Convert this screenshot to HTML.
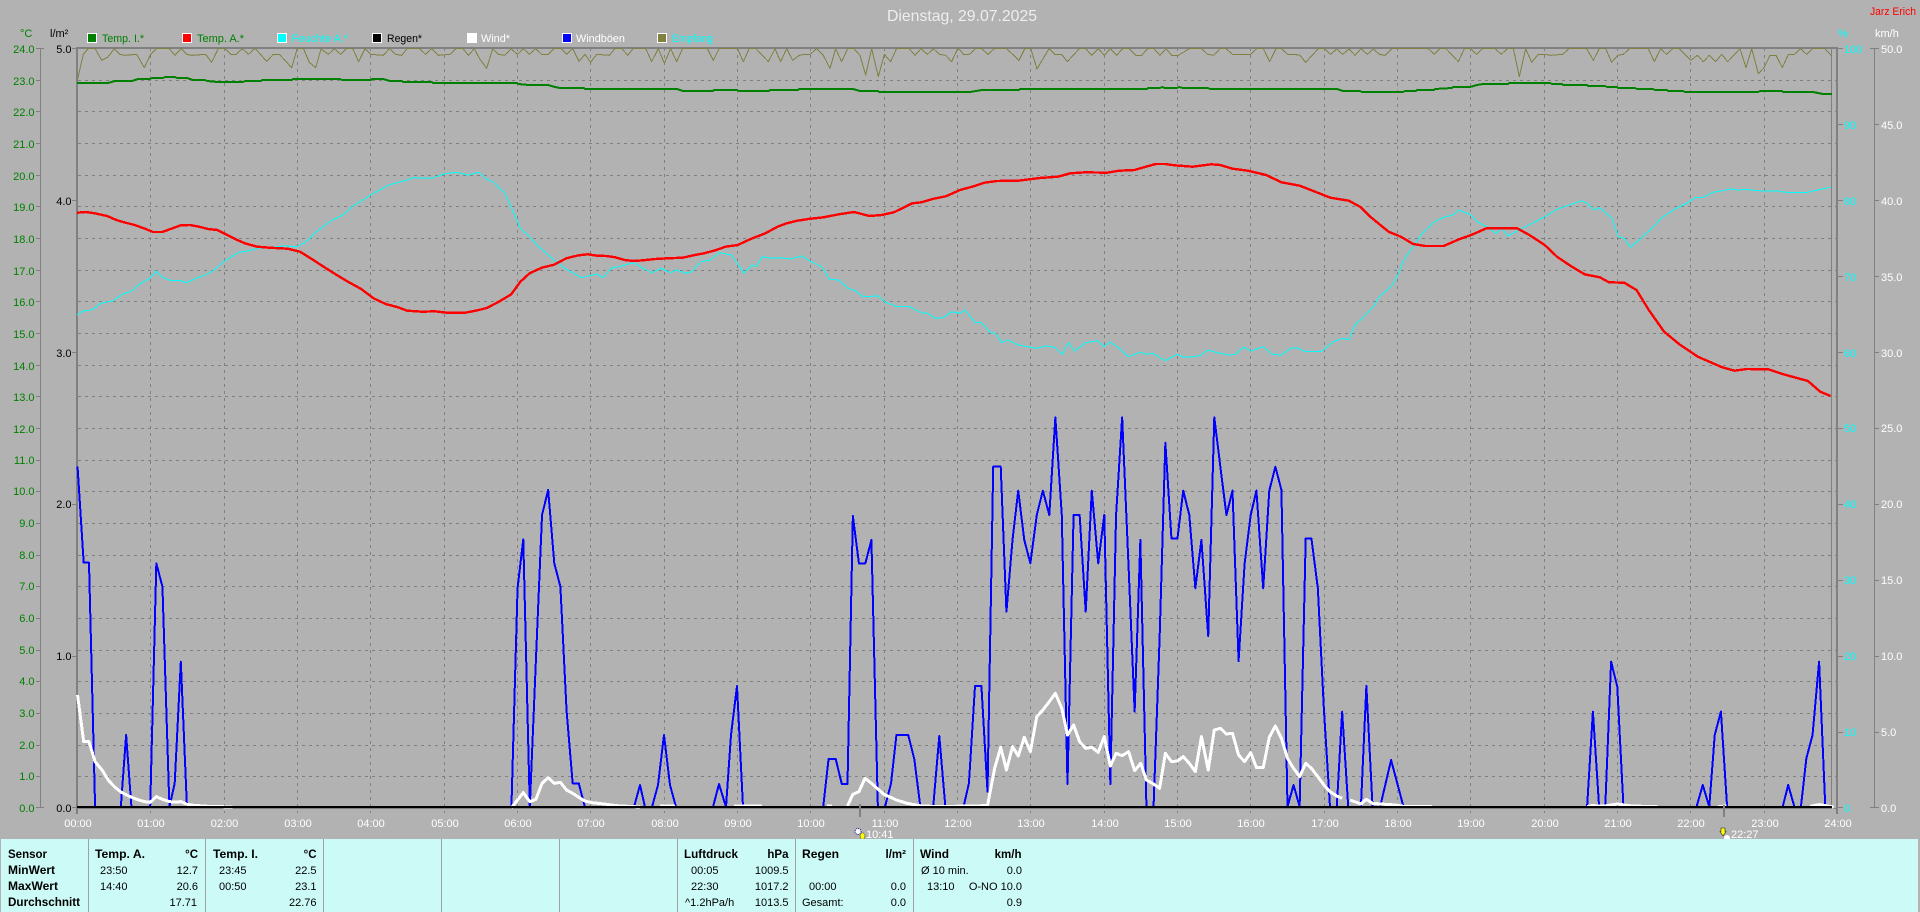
<!DOCTYPE html>
<html lang="de">
<head>
<meta charset="utf-8">
<title>Dienstag, 29.07.2025</title>
<style>
html,body{margin:0;padding:0;background:#b2b2b2;width:1920px;height:912px;overflow:hidden}
svg{display:block}
text{font-family:"Liberation Sans",Arial,sans-serif;font-size:11px}
.l{fill:none;stroke-linejoin:round;shape-rendering:crispEdges}
.b{font-weight:bold;font-size:11.5px}
polyline{vector-effect:non-scaling-stroke}
</style>
</head>
<body>
<svg xmlns="http://www.w3.org/2000/svg" width="1920" height="912" viewBox="0 0 1920 912">
<rect width="1920" height="912" fill="#b2b2b2"/>

<!-- title -->
<text x="887" y="21" fill="#eee" style="font-size:16px" textLength="150" lengthAdjust="spacingAndGlyphs">Dienstag, 29.07.2025</text>
<text x="1870" y="15" fill="#f00" textLength="46" lengthAdjust="spacingAndGlyphs">Jarz Erich</text>

<!-- legend -->
<g stroke="#fff" stroke-width="1" shape-rendering="crispEdges">
<rect x="87.5" y="33.5" width="9" height="9" fill="#008000"/>
<rect x="182.5" y="33.5" width="9" height="9" fill="#f00"/>
<rect x="277.5" y="33.5" width="9" height="9" fill="#0ff"/>
<rect x="372.5" y="33.5" width="9" height="9" fill="#000"/>
<rect x="467.5" y="33.5" width="9" height="9" fill="#fff"/>
<rect x="562.5" y="33.5" width="9" height="9" fill="#00f"/>
<rect x="657.5" y="33.5" width="9" height="9" fill="#808040"/>
</g>
<text x="102" y="42" fill="#008000" textLength="42" lengthAdjust="spacingAndGlyphs">Temp. I.*</text>
<text x="197" y="42" fill="#008000" textLength="47" lengthAdjust="spacingAndGlyphs">Temp. A.*</text>
<text x="292" y="42" fill="#0ff" textLength="56" lengthAdjust="spacingAndGlyphs">Feuchte A.*</text>
<text x="387" y="42" fill="#000" textLength="35" lengthAdjust="spacingAndGlyphs">Regen*</text>
<text x="481" y="42" fill="#fff" textLength="29" lengthAdjust="spacingAndGlyphs">Wind*</text>
<text x="576" y="42" fill="#fff" textLength="49" lengthAdjust="spacingAndGlyphs">Windböen</text>
<text x="672" y="42" fill="#0ff" textLength="41" lengthAdjust="spacingAndGlyphs">Empfang</text>

<!-- unit labels -->
<text x="20" y="37" fill="#008000">°C</text>
<text x="50" y="37" fill="#000">l/m²</text>
<text x="1838" y="37" fill="#0ff">%</text>
<text x="1875" y="37" fill="#fff">km/h</text>

<!-- grid -->
<path fill="none" stroke="#808080" stroke-width="1" stroke-dasharray="3 4" shape-rendering="crispEdges" d="M78 80.5H1837M78 111.5H1837M78 143.5H1837M78 175.5H1837M78 206.5H1837M78 238.5H1837M78 270.5H1837M78 301.5H1837M78 333.5H1837M78 365.5H1837M78 396.5H1837M78 428.5H1837M78 460.5H1837M78 491.5H1837M78 523.5H1837M78 555.5H1837M78 586.5H1837M78 618.5H1837M78 650.5H1837M78 681.5H1837M78 713.5H1837M78 745.5H1837M78 776.5H1837
M150.5 48V813M224.5 48V813M297.5 48V813M370.5 48V813M444.5 48V813M517.5 48V813M590.5 48V813M664.5 48V813M737.5 48V813M810.5 48V813M884.5 48V813M957.5 48V813M1030.5 48V813M1104.5 48V813M1177.5 48V813M1250.5 48V813M1324.5 48V813M1397.5 48V813M1470.5 48V813M1544.5 48V813M1617.5 48V813M1690.5 48V813M1764.5 48V813"/>

<!-- axes -->
<g fill="#808080" shape-rendering="crispEdges">
<rect x="76" y="47" width="1762" height="2"/>
<rect x="76" y="47" width="2" height="767"/>
<rect x="1836" y="47" width="2" height="767"/>
<rect x="1831" y="48" width="1" height="760"/>
<rect x="40" y="48" width="1" height="760"/>
<rect x="1874" y="48" width="1" height="760"/>
<rect x="76" y="808" width="1762" height="1"/>
<rect x="36" y="48" width="8" height="1"/><rect x="36" y="807" width="8" height="1"/>
<rect x="1870" y="48" width="9" height="1"/><rect x="1870" y="807" width="9" height="1"/>
<path fill="none" stroke="#808080" d="M36 80.5h5M36 111.5h5M36 143.5h5M36 175.5h5M36 206.5h5M36 238.5h5M36 270.5h5M36 301.5h5M36 333.5h5M36 365.5h5M36 396.5h5M36 428.5h5M36 460.5h5M36 491.5h5M36 523.5h5M36 555.5h5M36 586.5h5M36 618.5h5M36 650.5h5M36 681.5h5M36 713.5h5M36 745.5h5M36 776.5h5
M72 48.5h5M72 200.5h5M72 352.5h5M72 504.5h5M72 656.5h5M72 807.5h5
M1838 48.5h5M1838 124.5h5M1838 200.5h5M1838 276.5h5M1838 352.5h5M1838 428.5h5M1838 504.5h5M1838 580.5h5M1838 656.5h5M1838 732.5h5M1838 807.5h5
M1875 124.5h4M1875 200.5h4M1875 276.5h4M1875 352.5h4M1875 428.5h4M1875 504.5h4M1875 580.5h4M1875 656.5h4M1875 732.5h4"/>
</g>

<!-- left temperature labels -->
<g fill="#008000" text-anchor="end">
<text x="34.5" y="53">24.0</text><text x="34.5" y="85">23.0</text><text x="34.5" y="116">22.0</text><text x="34.5" y="148">21.0</text><text x="34.5" y="180">20.0</text><text x="34.5" y="211">19.0</text><text x="34.5" y="243">18.0</text><text x="34.5" y="275">17.0</text><text x="34.5" y="306">16.0</text><text x="34.5" y="338">15.0</text><text x="34.5" y="370">14.0</text><text x="34.5" y="401">13.0</text><text x="34.5" y="433">12.0</text><text x="34.5" y="464">11.0</text><text x="34.5" y="495">10.0</text><text x="34.5" y="527">9.0</text><text x="34.5" y="559">8.0</text><text x="34.5" y="590">7.0</text><text x="34.5" y="622">6.0</text><text x="34.5" y="654">5.0</text><text x="34.5" y="685">4.0</text><text x="34.5" y="717">3.0</text><text x="34.5" y="749">2.0</text><text x="34.5" y="780">1.0</text><text x="34.5" y="812">0.0</text>
</g>
<!-- rain labels -->
<g fill="#000" text-anchor="end">
<text x="71.5" y="53">5.0</text><text x="71.5" y="205">4.0</text><text x="71.5" y="357">3.0</text><text x="71.5" y="508">2.0</text><text x="71.5" y="660">1.0</text><text x="71.5" y="812">0.0</text>
</g>
<!-- humidity labels -->
<g fill="#0ff">
<text x="1844" y="53">100</text><text x="1844" y="129">90</text><text x="1844" y="205">80</text><text x="1844" y="281">70</text><text x="1844" y="357">60</text><text x="1844" y="432">50</text><text x="1844" y="508">40</text><text x="1844" y="584">30</text><text x="1844" y="660">20</text><text x="1844" y="736">10</text><text x="1844" y="812">0</text>
</g>
<!-- km/h labels -->
<g fill="#fff">
<text x="1881" y="53">50.0</text><text x="1881" y="129">45.0</text><text x="1881" y="205">40.0</text><text x="1881" y="281">35.0</text><text x="1881" y="357">30.0</text><text x="1881" y="432">25.0</text><text x="1881" y="508">20.0</text><text x="1881" y="584">15.0</text><text x="1881" y="660">10.0</text><text x="1881" y="736">5.0</text><text x="1881" y="812">0.0</text>
</g>

<!-- Empfang (olive) -->
<g class="l" stroke="#808040" stroke-width="1">
<polyline transform="scale(.33333)" points="232,241 250,163 265,145 285,145 305,181 323,172 343,146 360,163 375,166 410,163 433,203 452,163 470,145 507,145 525,166 543,146 560,163 575,166 617,163 635,187 655,145 675,145 692,163 708,163 727,146 745,163 765,145 800,184 820,163 838,163 875,203 892,145 910,145 928,187 947,203 963,147 985,163 1003,146 1022,163 1040,145 1058,145 1076,185 1095,146 1112,163 1150,166 1168,146 1187,163 1205,166 1222,145 1258,145 1277,163 1295,146 1315,166 1350,163 1368,145 1388,145 1405,166 1423,146 1440,178"/>
<polyline transform="translate(480 0) scale(.33333)" points="0,178 20,205 38,147 55,163 75,166 93,146 112,163 130,146 148,163 167,146 185,163 205,163 222,145 242,145 260,163 278,146 297,184 315,163 332,187 350,163 388,166 405,145 425,145 443,166 460,145 497,145 515,185 535,146 553,190 572,146 590,185 608,145 682,145 700,181 718,145 772,145 790,185 808,145 827,145 865,185 885,146 902,185 920,146 938,181 958,166 975,163 990,163 1010,146 1030,166 1050,205 1067,146 1085,185 1103,146 1122,146 1140,166 1157,225 1175,146 1195,230 1213,163 1232,185 1250,145 1287,145 1305,166 1323,146 1342,163 1360,146 1378,163 1397,166 1415,185 1433,146 1440,150"/>
<polyline transform="translate(960 0) scale(.33333)" points="0,150 10,163 28,163 47,146 65,146 84,163 103,146 140,146 177,181 195,145 212,145 231,207 267,146 285,163 305,163 322,185 358,146 377,146 395,166 415,146 433,166 450,146 470,166 488,146 508,146 527,166 545,166 563,146 582,146 600,166 618,146 635,166 655,166 688,146 725,146 743,163 762,166 780,146 798,146 818,163 872,163 890,146 910,146 929,185 948,146 965,146 983,163 1003,163 1020,166 1037,187 1075,146 1093,146 1112,163 1130,147 1148,163 1167,147 1185,166 1203,146 1222,163 1240,147 1258,163 1275,166 1295,146 1405,146 1423,163 1440,146"/>
<polyline transform="translate(1440 0) scale(.33333)" points="0,146 18,146 55,185 73,146 91,146 110,163 128,146 165,146 184,163 202,146 220,146 238,230 257,146 275,187 295,163 313,163 332,166 368,163 387,146 440,146 460,181 478,146 497,146 515,187 533,166 550,163 568,146 625,146 643,185 662,146 680,163 698,146 718,146 752,181 772,166 790,185 808,166 827,185 845,163 863,185 900,146 918,203 935,146 955,221 972,203 990,166 1008,166 1027,203 1045,163 1063,163 1082,146 1100,163 1118,146 1155,146 1173,166"/>
</g>

<!-- Temp I (green) -->
<polyline class="l" stroke="#008000" stroke-width="2" points="77,83 108,83 115,81 132,81 138,79 150,79 152,78 163,78 165,77 175,77 177,78 187,78 193,80 205,80 207,81 218,82 243,82 245,81 261,81 262,80 292,80 293,79 340,79 342,80 371,80 372,79 383,79 390,81 402,81 403,82 432,82 433,83 517,83 518,84 529,85 548,85 555,87 560,88 584,88 585,89 677,89 683,91 713,91 714,90 737,90 739,91 769,91 770,90 798,90 799,89 853,89 860,91 878,91 879,92 970,92 982,90 1019,90 1020,89 1147,89 1148,88 1160,88 1162,87 1165,88 1177,88 1179,87 1183,88 1208,88 1210,89 1337,89 1343,91 1360,91 1362,92 1403,92 1405,91 1416,91 1417,90 1434,90 1435,89 1452,88 1453,87 1470,87 1477,85 1483,84 1508,84 1509,83 1550,83 1552,84 1562,84 1563,85 1587,85 1588,86 1605,86 1607,87 1617,87 1618,88 1635,88 1637,89 1653,89 1655,90 1667,90 1668,91 1683,91 1685,92 1758,92 1760,91 1782,91 1783,92 1813,92 1818,93 1823,94 1832,94"/>

<!-- Feuchte (cyan) -->
<polyline class="l" stroke="#0ff" stroke-width="1" points="77,315 82.7,311 91.8,310 101,303.3 113.3,300.7 122.4,294.3 131.6,291 140.8,283.3 150,278.3 156.1,271 162.2,277.3 171.4,280.7 180.6,280.7 186.7,282.7 195.9,278.3 205.1,275 214.3,270 223.5,261.7 238.8,252.3 248,251 257.1,248.3 269.4,247.3 284.7,246 296.9,246.7 306.1,241.7 318.4,230 330.6,221 342.9,215 352,206.7 373.5,193.3 388.8,185 407.1,180 413.3,177.7 431.6,178.3 443.9,174 456.1,172.3 468.4,175 478.8,172.3 486.7,179.3 492.9,181.7 505.1,193.3 520.4,228.3 529.6,236.7 538.8,246.7 554.1,260 566.3,269.3 581.6,277.7 597,274 603.1,277.7 611,268.3 621.4,266 633.7,262.7 642.9,268.3 652,272.7 661.2,268.3 670.4,272.7 676.5,270 685.7,273.3 691.8,271.7 701,261.7 710.2,260 719.4,252.7 731.6,255 743.9,273.3 751.8,265 756.1,266.7 762.2,256.7 771.4,258.3 780.6,257.7 789.8,259 802,256 811.2,261.7 821.6,266.7 829.6,279.3 838.8,280 848,288.3 854.1,290 863.3,296.7 878.6,296 884.7,301.7 896.9,306.7 909.2,306.7 921.4,312.7 927.6,313.3 935.5,318.3 942.9,317.7 952,311.7 960,313.3 964.9,310 975.3,322.7 981.4,322.7 990.6,332.7 995.5,333.3 1001.6,342.7 1007.8,340 1018.2,345 1036.5,348.3 1045.7,346 1054.9,347.3 1062.2,354.3 1068.4,342.7 1074.5,351 1085.5,342.7 1097.8,340.7 1103.9,346.7 1110,342 1119.2,348.3 1128.4,356.7 1140.6,352.3 1146.7,354.3 1152.9,353.3 1165.1,360.7 1177.3,354.3 1183.5,357.3 1192.7,356.7 1200,355.7 1208,350 1217.1,352.7 1229.4,355 1235.5,354.3 1243.5,347 1250.8,351 1263.1,346.7 1272.2,354.3 1281.4,355 1290.6,348.3 1296.7,347.7 1305.9,351.7 1321.2,351.7 1333.5,341.7 1342.7,338.3 1348.8,340 1354.9,325 1364.1,316.7 1373.3,306.7 1379.4,296.7 1391.6,286 1397.8,275 1403.9,260 1413.1,246.7 1422.2,233.3 1434.5,221.7 1443.7,217.3 1452.9,215 1459,210 1471.2,215 1477.3,221.7 1486.5,226.7 1495.7,233.3 1501.8,228.3 1508,236 1520.2,229.3 1532.4,223.3 1544.7,216.7 1557,209.3 1566.1,206 1581.4,201 1587.6,203.3 1593.7,210 1599.8,207.7 1612,218.3 1618.2,236.7 1624.3,238.3 1630.4,247.3 1642.7,236.7 1651.9,228.3 1661,218.3 1673.3,210 1688.6,202.3 1694.7,197.7 1703.9,197.3 1713.1,192.3 1731.4,189 1737.6,190 1746.7,189.3 1755.9,190.7 1777.4,191 1786.5,192.3 1808,192.3 1817.2,190 1830.6,187.3"/>

<!-- Temp A (red) -->
<polyline class="l" stroke="#f00" stroke-width="2.4" points="77.1,212.7 85.7,212 94.9,213.3 107.1,216 116.3,220 125.5,222.7 134.7,225 143.9,228.3 153.1,232 162.2,232 171.4,228.7 180.6,225.3 189.8,225 199,226.7 208.2,229 217.4,230 226.5,234.7 235.7,239.3 244.9,243.3 257.1,246.7 269.4,247.7 287.8,248.7 300,251.7 312.2,259.3 324.5,267.3 336.7,275 349,282.3 361.2,289 373.5,298.3 385.7,304 398,307.3 407.1,310.7 422.4,311.7 434.7,311.3 447,312.7 465.3,312.7 477.6,310.3 486.7,308 499,301.7 511.2,294.3 520.4,281.7 529.6,273.3 541.8,267.7 554.1,264.7 566.3,258.3 578.6,255.3 587.8,254.3 597,255.7 606.1,256 615.3,257.3 624.5,260 633.7,261 642.9,260.3 655.1,259 667.4,258.3 682.7,257.7 694.9,255 704.1,253.3 716.3,250 725.5,246.7 737.8,245 750,239.3 765.3,233.3 777.6,226.7 786.7,223.3 795.9,221 808.2,219 823.5,217.3 838.8,214.3 854.1,212 869.4,216 881.6,215 893.9,212.3 912.2,203.3 921.4,202.3 933.7,198.7 945.9,196.3 960,190 972.2,186.7 984.5,182.7 996.7,181 1018.2,180.7 1039.6,178 1058,176.7 1070.2,173.3 1085.5,172.3 1106.9,172.7 1119.2,170.7 1134.5,170 1143.7,167.3 1155.9,164 1165.1,164 1174.3,165.3 1192.7,166.7 1211,164.3 1220.2,165 1232.4,168.7 1247.8,170.7 1266.1,175 1281.4,182.3 1299.8,185.7 1315.1,191.7 1330.4,197.7 1348.8,200.7 1361,207.3 1370.2,216.7 1388.6,231.7 1400.8,236.7 1413.1,244 1425.3,246 1443.7,246 1459,239.3 1471.2,235 1486.5,228.3 1517.1,228.3 1529.4,235 1544.7,245 1557,256.7 1569.2,265 1584.5,274.3 1599.8,277.3 1609,282.3 1624.3,282.7 1636.5,290 1648.8,310 1664.1,331.7 1679.4,344.3 1697.8,356.7 1722.2,367.3 1734.5,370.7 1746.7,369 1768.2,369.3 1783.5,374.3 1808,381 1820.2,391.7 1830.6,396"/>

<!-- Windböen (blue) -->
<g class="l" stroke="#00f" stroke-width="2">
<g transform="translate(0 440) scale(.40816 .33333)">
<polyline points="190,80 205,368 218,368 233,1101"/>
<polyline points="296,1101 309,885 322,1101"/>
<polyline points="368,1101 383,370 398,440 415,1101 428,1030 443,665 458,1101"/>
<polyline points="1253,1101 1268,445 1282,298 1298,1101 1313,660 1328,225 1343,150 1358,370 1373,440 1388,810 1403,1030 1418,1030 1433,1101"/>
</g>
<polyline points="634,807 640,785 645,807"/>
<polyline points="652,807 658,785 664,735 670,785 676,807"/>
<polyline points="713,807 719,784 726,807 731,735 737,686 743,807"/>
<g transform="translate(800 400) scale(.35714 .33333)">
<polyline points="65,1220 80,1077 100,1077 117,1152 133,1152 148,348 165,490 183,490 200,420 218,1220"/>
<polyline points="238,1220 255,1150 270,1005 303,1005 320,1077 337,1220"/>
<polyline points="373,1220 390,1008 407,1220"/>
<polyline points="458,1220 473,1150 490,858 508,858 525,1175 541,200 562,200 578,635 595,420 611,272 628,420 645,490 663,345 680,272 698,345 715,52 733,345 749,1152 766,345 783,345 800,635 817,272 835,490 852,345 869,1152 885,345 902,52 920,500 937,935 953,420 970,1220"/>
<polyline points="990,1220 1007,710 1023,128 1040,415 1057,415 1073,272 1090,345 1107,565 1124,420 1143,708 1160,52 1177,200 1194,345 1211,272 1228,783 1245,490 1262,345 1278,272 1297,565 1314,272 1331,200 1348,270 1365,1220 1382,1155 1399,1220 1416,415 1432,415 1450,565 1467,930 1484,1220"/>
<polyline points="1503,1220 1518,935 1535,1220"/>
</g>
<g transform="translate(1350 400) scale(.36364 .33333)">
<polyline points="30,1220 45,858 62,1220"/>
<polyline points="83,1220 113,1080 147,1220"/>
<polyline points="652,1220 668,935 685,1220"/>
<polyline points="702,1220 718,785 735,860 752,1220"/>
<polyline points="953,1220 970,1155 988,1220 1003,1005 1020,935 1037,1220"/>
<polyline points="1190,1220 1205,1155 1222,1220"/>
<polyline points="1240,1220 1255,1075 1272,1005 1290,785 1307,1220"/>
</g>
</g>

<!-- Wind (white) -->
<g class="l" stroke="#fff" stroke-width="3">
<polyline transform="translate(0 440) scale(.40816 .33333)" points="190,765 205,905 218,905 233,965 250,990 265,1020 280,1040 295,1055 310,1065 325,1073 340,1080 355,1085 368,1087 383,1070 398,1078 415,1085 430,1086 443,1085 458,1093 475,1096 510,1099 570,1101"/>
<polyline transform="translate(0 440) scale(.40816 .33333)" points="1253,1103 1268,1080 1282,1058 1298,1085 1313,1078 1328,1030 1343,1013 1358,1030 1373,1027 1388,1050 1403,1060 1418,1072 1433,1083 1450,1088 1480,1092 1510,1097 1568,1101"/>
<polyline points="660,806 675,806"/>
<polyline points="734,806 762,806"/>
<polyline points="827,806 832,806"/>
<polyline transform="translate(800 400) scale(.35714 .33333)" points="133,1218 148,1183 165,1175 182,1135 200,1150 235,1183 270,1200 300,1210 340,1218 400,1220 458,1218 525,1217 545,1105 562,1042 578,1110 595,1040 611,1068 628,1012 645,1055 663,950 680,930 698,905 715,880 733,925 749,1005 766,975 783,1025 800,1045 817,1042 835,1057 852,1010 869,1098 885,1060 902,1067 920,1055 937,1112 954,1090 970,1140 990,1152 1007,1165 1023,1060 1040,1085 1057,1083 1073,1070 1090,1090 1107,1115 1124,1010 1143,1110 1160,990 1177,985 1194,1002 1211,1000 1228,1065 1245,1085 1262,1058 1278,1103 1297,1103 1314,1012 1331,978 1348,1015 1365,1075 1382,1105 1399,1130 1416,1090 1432,1105 1450,1130 1467,1155 1484,1175 1503,1188 1518,1195"/>
<polyline transform="translate(1350 400) scale(.36364 .33333)" points="0,1200 30,1212 45,1198 62,1210 85,1212 125,1215 147,1219 225,1220"/>
<polyline transform="translate(1350 400) scale(.36364 .33333)" points="652,1220 665,1217 700,1218 735,1212 775,1218 845,1220"/>
<polyline transform="translate(1350 400) scale(.36364 .33333)" points="1012,1220 1035,1218"/>
<polyline transform="translate(1350 400) scale(.36364 .33333)" points="1265,1219 1290,1214 1330,1221"/>
</g>

<!-- baseline -->
<rect x="77" y="806" width="1755" height="2" fill="#000" shape-rendering="crispEdges"/>

<!-- time labels -->
<g fill="#fff" text-anchor="middle">
<text x="78" y="827">00:00</text><text x="151" y="827">01:00</text><text x="224.5" y="827">02:00</text><text x="298" y="827">03:00</text><text x="371" y="827">04:00</text><text x="445" y="827">05:00</text><text x="518" y="827">06:00</text><text x="591" y="827">07:00</text><text x="665" y="827">08:00</text><text x="738" y="827">09:00</text><text x="811" y="827">10:00</text><text x="885" y="827">11:00</text><text x="958" y="827">12:00</text><text x="1031" y="827">13:00</text><text x="1105" y="827">14:00</text><text x="1178" y="827">15:00</text><text x="1251" y="827">16:00</text><text x="1325" y="827">17:00</text><text x="1398" y="827">18:00</text><text x="1471" y="827">19:00</text><text x="1545" y="827">20:00</text><text x="1618" y="827">21:00</text><text x="1691" y="827">22:00</text><text x="1765" y="827">23:00</text><text x="1838" y="827">24:00</text>
</g>

<!-- sunrise / sunset -->
<rect x="859" y="804" width="2" height="13" fill="#808080"/>
<rect x="1723" y="805" width="2" height="12" fill="#808080"/>
<circle cx="858" cy="831.5" r="3" fill="#fff" stroke="#000080" stroke-width="1" stroke-dasharray="1 1"/>
<polygon points="862.5,832 865.5,836 864.5,836 864.5,839 860.5,839 860.5,836 859.5,836" fill="#ff0" stroke="#554" stroke-width=".5"/>
<text x="866" y="838" fill="#fff">10:41</text>
<polygon points="1723,836 1720,831.5 1721,831.5 1721,828 1725,828 1725,831.5 1726,831.5" fill="#ff0" stroke="#222" stroke-width=".6"/>
<circle cx="1727" cy="838" r="3" fill="#fff"/>
<text x="1731" y="838" fill="#fff">22:27</text>

<!-- bottom panel -->
<rect x="1" y="839" width="1917" height="73" fill="#ccfaf7"/>
<g fill="#a0a0a0" shape-rendering="crispEdges">
<rect x="88" y="839" width="1" height="73"/><rect x="205" y="839" width="1" height="73"/><rect x="323" y="839" width="1" height="73"/><rect x="441" y="839" width="1" height="73"/><rect x="559" y="839" width="1" height="73"/><rect x="677" y="839" width="1" height="73"/><rect x="795" y="839" width="1" height="73"/><rect x="913" y="839" width="1" height="73"/>
</g>
<g fill="#000">
<text class="b" x="8" y="858" textLength="39" lengthAdjust="spacingAndGlyphs">Sensor</text>
<text class="b" x="8" y="874" textLength="47" lengthAdjust="spacingAndGlyphs">MinWert</text>
<text class="b" x="8" y="890" textLength="50" lengthAdjust="spacingAndGlyphs">MaxWert</text>
<text class="b" x="8" y="906" textLength="72" lengthAdjust="spacingAndGlyphs">Durchschnitt</text>

<text class="b" x="95" y="858" textLength="50" lengthAdjust="spacingAndGlyphs">Temp. A.</text>
<text class="b" x="198" y="858" text-anchor="end">°C</text>
<text x="100" y="874">23:50</text><text x="198" y="874" text-anchor="end">12.7</text>
<text x="100" y="890">14:40</text><text x="198" y="890" text-anchor="end">20.6</text>
<text x="197" y="906" text-anchor="end">17.71</text>

<text class="b" x="213" y="858" textLength="45" lengthAdjust="spacingAndGlyphs">Temp. I.</text>
<text class="b" x="316.5" y="858" text-anchor="end">°C</text>
<text x="219" y="874">23:45</text><text x="316.5" y="874" text-anchor="end">22.5</text>
<text x="219" y="890">00:50</text><text x="316.5" y="890" text-anchor="end">23.1</text>
<text x="316.5" y="906" text-anchor="end">22.76</text>

<text class="b" x="684" y="858" textLength="54" lengthAdjust="spacingAndGlyphs">Luftdruck</text>
<text class="b" x="788.5" y="858" text-anchor="end">hPa</text>
<text x="691" y="874">00:05</text><text x="788.5" y="874" text-anchor="end">1009.5</text>
<text x="691" y="890">22:30</text><text x="788.5" y="890" text-anchor="end">1017.2</text>
<text x="685" y="906">^1.2hPa/h</text><text x="788.5" y="906" text-anchor="end">1013.5</text>

<text class="b" x="802" y="858" textLength="37" lengthAdjust="spacingAndGlyphs">Regen</text>
<text class="b" x="906" y="858" text-anchor="end">l/m²</text>
<text x="809" y="890">00:00</text><text x="906" y="890" text-anchor="end">0.0</text>
<text x="802" y="906">Gesamt:</text><text x="906" y="906" text-anchor="end">0.0</text>

<text class="b" x="920" y="858" textLength="29" lengthAdjust="spacingAndGlyphs">Wind</text>
<text class="b" x="1021.5" y="858" text-anchor="end">km/h</text>
<text x="921" y="874">Ø 10 min.</text><text x="1022" y="874" text-anchor="end">0.0</text>
<text x="927" y="890">13:10</text><text x="1022" y="890" text-anchor="end">O-NO 10.0</text>
<text x="1022" y="906" text-anchor="end">0.9</text>
</g>
</svg>
</body>
</html>
